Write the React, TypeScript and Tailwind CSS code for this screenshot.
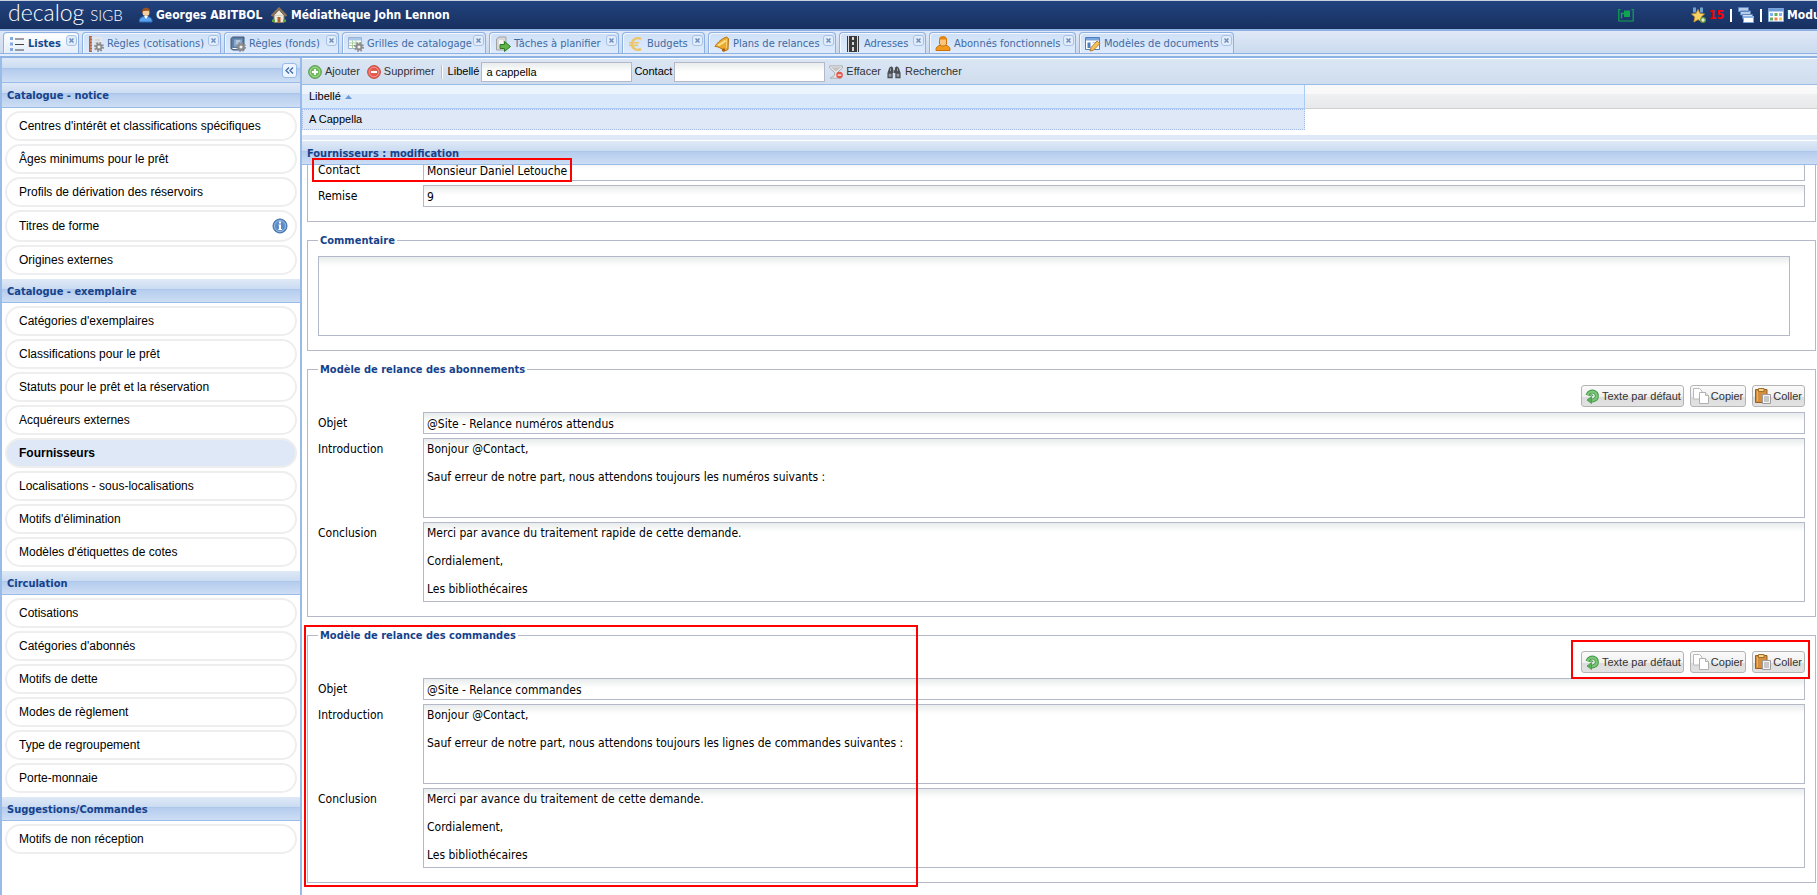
import type { ReactNode } from 'react';

const headerBar =
  'bg-[linear-gradient(to_bottom,#dfe9f6_0%,#cbdcf2_42%,#a9c5ea_43%,#b6cdee_50%,#cddef4_100%)] border-b border-[#99bbe8]';
const fieldBg = 'border border-[#b5b8c8] bg-white bg-[linear-gradient(to_bottom,#e9ecec_0px,#fdfdfd_8px,#ffffff_10px)]';

function Svg({ size = 16, children }: { size?: number; children: ReactNode }) {
  return (
    <svg width={size} height={size} viewBox="0 0 16 16" className="shrink-0" aria-hidden="true">
      {children}
    </svg>
  );
}

function Gear() {
  return (
    <g>
      <circle cx="11" cy="11" r="4" fill="none" stroke="#8e8e8e" strokeWidth="2" strokeDasharray="1.6 1.54" />
      <circle cx="11" cy="11" r="2.6" fill="#c4c4c4" stroke="#8a8a8a" strokeWidth="1.6" />
      <circle cx="11" cy="11" r="1" fill="#fff" />
    </g>
  );
}

const icons: Record<string, ReactNode> = {
  list: (
    <Svg>
      <path d="M1 1h3v3H1zM1 6.500h3v3H1zM1 12h3v3H1z" fill="#84a9dd" />
      <path d="M6 3h9M6 8.500h9M6 14h9" stroke="#444" strokeWidth="1" />
    </Svg>
  ),
  ruler: (
    <Svg>
      <path d="M5 1h9v13H5z" fill="#e4e6ea" />
      <path d="M7 4h5M7 7h5M7 10h3" stroke="#c3c7cf" />
      <path d="M1 0h3v16H1z" fill="#b5643c" />
      <path d="M2.500 2H4M2.500 5H4M2.500 8H4M2.500 11H4M2.500 14H4" stroke="#f4c9a8" />
      <Gear />
    </Svg>
  ),
  book: (
    <Svg>
      <path d="M1 2.500 2.500 1H14v13H2.500L1 12.500z" fill="#5e7ea3" stroke="#3c587b" />
      <path d="M4 3.500h8v7H4z" fill="#8aa9cc" />
      <path d="M6 5h4M6 7h3" stroke="#dce7f3" />
      <path d="M2.500 12.500H13" stroke="#fff" />
      <Gear />
    </Svg>
  ),
  grid: (
    <Svg>
      <path d="M.5 1.500h13v11H.5z" fill="#fff" stroke="#9db3d0" />
      <path d="M1 2h12v2.500H1z" fill="#a9c8ee" />
      <path d="M1 7h12M1 9.500h12M4.500 4.500v8M8 4.500v8" stroke="#a9cf9f" />
      <Gear />
    </Svg>
  ),
  task: (
    <Svg>
      <path d="M1.500 3 4 1h7v11l-2 2H1.500z" fill="#d8d8d8" stroke="#a2a2a2" />
      <path d="M4 4h4v8H4z" fill="#f4f4f4" />
      <path d="M5 8.500h4.500V5.500L15.500 10.500l-6 5v-3H5z" fill="#62b34a" stroke="#2c7d25" />
    </Svg>
  ),
  euro: (
    <Svg>
      <path d="M13 3.200A5.800 5.800 0 1 0 13 12.800" fill="none" stroke="#ecc66a" strokeWidth="2.600" />
      <path d="M1 6.700h10M1 9.400h9" stroke="#ecc66a" strokeWidth="1.600" />
    </Svg>
  ),
  bell: (
    <Svg>
      <path d="M12.500 1 14.500 2.500 14 13.500 10.500 15C8 12.500 4 10.500.8 10.300 3 8 5 4 12.500 1z" fill="#eda92c" stroke="#b87415" />
      <path d="M11.500 4.500c-2 2-5 3.500-7.500 5" stroke="#ffe08a" strokeWidth="2" fill="none" />
      <path d="M12.500 3v9" stroke="#fbd06b" />
      <circle cx="9.500" cy="14" r="1.700" fill="#a7651a" />
    </Svg>
  ),
  road: (
    <Svg>
      <path d="M2 0h12v16H2z" fill="#3a3a3a" />
      <path d="M3.500 0v16M12.500 0v16" stroke="#dcdcdc" />
      <path d="M8 1v3M8 6v3M8 11v4" stroke="#fff" strokeWidth="1.600" />
    </Svg>
  ),
  person: (
    <Svg>
      <path d="M1 14.500c-.5-4 3-5.500 7-5.500s7.500 1.500 7 5.500z" fill="#f59b1c" stroke="#c9710a" />
      <path d="M4.500 2.500C5 1 6.500.8 8 .8s3 .2 3.500 1.700V8l-2 2h-3l-2-2z" fill="#fbc67c" stroke="#c9710a" />
      <path d="M4 5C4 1.500 6 .5 8 .5s4 1 4 4.500L10.500 3.500h-5z" fill="#e8850f" />
    </Svg>
  ),
  model: (
    <Svg>
      <path d="M.5 1.500h14v12H.5z" fill="#fff" stroke="#4d7fc0" />
      <path d="M1 2h13v2.500H1z" fill="#79a5dd" />
      <path d="M2.500 6.500h3V12h-3z" fill="#4d7fc0" />
      <path d="M7.500 6.500H13" stroke="#bcd" />
      <path d="m5 15 1-3.500L12 5l3 2.500-6.500 6.700z" fill="#f3c25a" stroke="#a86d1d" strokeWidth=".8" />
    </Svg>
  ),
  add: (
    <Svg size={14}>
      <circle cx="8" cy="8" r="7.300" fill="#6fbb5b" stroke="#4b943c" />
      <circle cx="8" cy="8" r="5.600" fill="none" stroke="#b4dda8" />
      <path d="M8 4.500v7M4.500 8h7" stroke="#fff" strokeWidth="2.200" />
    </Svg>
  ),
  remove: (
    <Svg size={14}>
      <circle cx="8" cy="8" r="7.300" fill="#e4584c" stroke="#c23b32" />
      <circle cx="8" cy="8" r="5.600" fill="none" stroke="#f4a9a2" />
      <path d="M4.500 8h7" stroke="#fff" strokeWidth="2.400" />
    </Svg>
  ),
  clear: (
    <Svg size={14}>
      <path d="M.8 1h14.400v2.500L9.500 8.500V12l4.500 3H1.500L6.500 12V8.500L.8 3.500z" fill="#ececec" stroke="#a5a5a5" />
      <path d="M2 2.500h12L8 7.500z" fill="#c4c4c4" />
      <circle cx="12" cy="11.500" r="3.800" fill="#e4584c" />
      <path d="M10 11.500h4" stroke="#fff" strokeWidth="1.400" />
    </Svg>
  ),
  search: (
    <Svg size={14}>
      <path d="M2.500 3 5 1.500 7 3v3h2V3l2-1.500L13.500 3 15.500 9v6H9.500V9h-3v6H.5V9z" fill="#4a4f55" />
      <path d="M2 10h3v3.500H2zM11 10h3v3.500h-3z" fill="#9aa1a8" />
      <path d="M4 4v3M12 4v3M7.500 6v3" stroke="#a8adb3" />
    </Svg>
  ),
  reset: (
    <Svg>
      <path d="M3.500 7.200C4.500 3.800 8 2.800 10.700 4.300 13.600 6 13.600 10.300 10.500 11.800 9.500 12.300 8.500 12.500 7.500 12.500" fill="none" stroke="#3f9a45" strokeWidth="4" />
      <path d="M3.500 7.200C4.500 3.800 8 2.800 10.700 4.300 13.600 6 13.600 10.300 10.500 11.800 9.500 12.300 8.500 12.500 7.500 12.500" fill="none" stroke="#7cc579" strokeWidth="2.200" />
      <path d="M7.500 8.500v7L3 12z" fill="#5cb05b" stroke="#3f9a45" strokeWidth=".8" />
      <path d="M5.500 8c1-1.500 3-1.500 3.500 0" fill="none" stroke="#3f9a45" strokeWidth="1.200" />
    </Svg>
  ),
  copy: (
    <Svg>
      <path d="M.5.5h6l2.500 2.500v8H.5z" fill="#fff" stroke="#b9b9b9" />
      <path d="M6.500 4.500h6L15.500 7.500v8h-9z" fill="#fff" stroke="#b0b0b0" />
      <path d="M12.500 4.500v3h3" fill="#eee" stroke="#b0b0b0" />
    </Svg>
  ),
  paste: (
    <Svg>
      <path d="M.5 1.500h11.500v13H.5z" fill="#d48f3e" stroke="#9b5f1c" />
      <path d="M2.500 3v10" stroke="#e8b06a" />
      <path d="M3.500.5H9v3H3.500z" fill="#f4d58b" stroke="#a3702a" />
      <path d="M7.500 6.500h8v9h-8z" fill="#f4f4f4" stroke="#9b9b9b" />
      <path d="M9 9h5M9 11h5M9 13h5" stroke="#9b9b9b" />
    </Svg>
  ),
  user: (
    <Svg>
      <path d="M1.500 15c-.5-4 2-5.500 6-5.500s7 1.500 6.500 5.500z" fill="#5aa2ee" stroke="#2b6fc4" />
      <path d="M6 9h4l-2 3z" fill="#fff" />
      <circle cx="8" cy="5.500" r="3.500" fill="#f6cfa0" />
      <path d="M4 6C3.500 2 6 .8 8.500.8S12.500 3 12 6L10.500 3.800 5.500 4z" fill="#9a5220" />
    </Svg>
  ),
  home: (
    <Svg>
      <path d="M3 8h10v7.500H3z" fill="#efe9dc" stroke="#8a8375" />
      <path d="M3 8.500 8 3l5 5.500z" fill="#efe9dc" />
      <path d="M6.500 10h3v5.500h-3z" fill="#a8632a" />
      <path d="M.5 9 8 1.500 15.500 9" fill="none" stroke="#8f7355" strokeWidth="2.200" />
      <path d="M1 12.500h3V15H1zM12 12.500h3V15h-3z" fill="#5da53e" />
    </Svg>
  ),
  signal: (
    <Svg>
      <path d="M2.500 2.500H.8v11.500h14.400V2.500h-1.700" fill="none" stroke="#12a352" strokeWidth="1.200" />
      <path d="M3.500 11.500V6.500H6" fill="none" stroke="#12a352" strokeWidth="1.400" />
      <path d="M6 3.500h6v6.500H6z" fill="#12a352" />
    </Svg>
  ),
  medal: (
    <Svg>
      <path d="M3 .5h3v5H3zM10 .5h3v5h-3z" fill="#6fa3d4" />
      <path d="m8 2.500 1.900 4 4.600.5-3.400 3 1 5L8 12.500 3.900 15l1-5-3.400-3 4.600-.5z" fill="#f8d468" stroke="#d79c2c" strokeWidth=".8" />
      <circle cx="13" cy="13" r="3" fill="#6a9a3c" />
      <path d="M13 11.200v3.600M11.200 13h3.600" stroke="#fff" strokeWidth="1.200" />
    </Svg>
  ),
  windows: (
    <Svg>
      <path d="M.5.5h10v4H.5zM2.500 4h10v4h-10z" fill="#b9cdea" stroke="#5f86bd" />
      <path d="M4.500 7.500h10v4h-10z" fill="#d4e0f2" stroke="#5f86bd" />
      <path d="M5.500 9.500h10v6h-10z" fill="#fff" stroke="#7da4d8" />
      <path d="M5 9h11v2H5z" fill="#8db3e4" />
    </Svg>
  ),
  modules: (
    <Svg>
      <path d="M.5 1.500h15v13H.5z" fill="#fff" stroke="#89acd8" />
      <path d="M.5 1.500h15v3H.5z" fill="#6f9fdb" />
      <path d="M2 6h3v3H2z" fill="#7fb2ea" />
      <path d="M6.500 6h3v3h-3z" fill="#6bab5c" />
      <path d="M11 6h3v3h-3z" fill="#7fb2ea" />
      <path d="M2 10.500h3v3H2z" fill="#6bab5c" />
      <path d="M6.500 10.500h3v3h-3z" fill="#ee8352" />
      <path d="M11 10.500h3v3h-3z" fill="#f2c84b" />
    </Svg>
  ),
};

const tabs = [
  { label: 'Listes', icon: 'list', width: 'w-[76px]' },
  { label: 'Règles (cotisations)', icon: 'ruler', width: 'w-[139px]' },
  { label: 'Règles (fonds)', icon: 'book', width: 'w-[115px]' },
  { label: 'Grilles de catalogage', icon: 'grid', width: 'w-[144px]' },
  { label: 'Tâches à planifier', icon: 'task', width: 'w-[130px]' },
  { label: 'Budgets', icon: 'euro', width: 'w-[83px]' },
  { label: 'Plans de relances', icon: 'bell', width: 'w-[128px]' },
  { label: 'Adresses', icon: 'road', width: 'w-[87px]' },
  { label: 'Abonnés fonctionnels', icon: 'person', width: 'w-[147px]' },
  { label: 'Modèles de documents', icon: 'model', width: 'w-[155px]' },
];

const menu = [
  {
    title: 'Catalogue - notice',
    items: [
      "Centres d'intérêt et classifications spécifiques",
      'Âges minimums pour le prêt',
      'Profils de dérivation des réservoirs',
      'Titres de forme',
      'Origines externes',
    ],
  },
  {
    title: 'Catalogue - exemplaire',
    items: [
      "Catégories d'exemplaires",
      'Classifications pour le prêt',
      'Statuts pour le prêt et la réservation',
      'Acquéreurs externes',
      'Fournisseurs',
      'Localisations - sous-localisations',
      "Motifs d'élimination",
      "Modèles d'étiquettes de cotes",
    ],
  },
  {
    title: 'Circulation',
    items: ['Cotisations', "Catégories d'abonnés", 'Motifs de dette', 'Modes de règlement', 'Type de regroupement', 'Porte-monnaie'],
  },
  { title: 'Suggestions/Commandes', items: ['Motifs de non réception'] },
];

function TopBar() {
  return (
    <header className="flex h-[31px] items-center overflow-hidden border-t border-b-2 border-t-[#c9d3df] border-b-[#8db2e3] bg-linear-to-b from-[#22437f] to-[#17305f] pl-2 text-xs font-bold text-white">
      <div className="mb-[3px] flex w-[130px] shrink-0 items-baseline gap-[6px] font-['Lato',sans-serif] font-light leading-6">
        <span className="text-[23px]">decalog</span>
        <span className="text-[15px]">SIGB</span>
      </div>
      <div className="flex items-center gap-[2px] whitespace-nowrap">
        {icons.user}
        <span className="w-[113px]">Georges ABITBOL</span>
        {icons.home}
        <span className="ml-[2px]">Médiathèque John Lennon</span>
      </div>
      <div className="ml-auto flex shrink-0 items-center">
        {icons.signal}
        <div className="ml-14 flex w-[127px] items-center overflow-hidden">
          {icons.medal}
          <span className="ml-[3px] w-[21px] shrink-0 text-[#ff0000]">15</span>
          <span className="mr-[6px] h-[13px] w-[2px] shrink-0 bg-white" />
          {icons.windows}
          <span className="mx-[6px] h-[13px] w-[2px] shrink-0 bg-white" />
          {icons.modules}
          <span className="ml-[3px] whitespace-nowrap">Modu</span>
        </div>
      </div>
    </header>
  );
}

function TabBar() {
  return (
    <nav className="border-b-2 border-[#8db2e3] bg-[#e4edfa]">
      <div className="flex h-[23px] items-end gap-[3px] border-b border-[#8db2e3] bg-linear-to-b from-[#dfe8f6] to-[#cbdbef] pl-[3px]">
        {tabs.map((tab, i) => (
          <div
            key={tab.label}
            className={`relative flex h-[21px] shrink-0 rounded-t border border-b-0 border-[#8db2e3] shadow-[inset_1px_1px_0_#f4f8fd] ${tab.width} ${
              i === 0 ? 'bg-linear-to-b from-white to-[#e4edfa] font-bold text-[#15498b]' : 'bg-linear-to-b from-[#cfe0f7] to-[#deebfd] text-[#416aa3]'
            }`}
          >
            <button type="button" className="flex items-center gap-[3px] whitespace-nowrap pt-[2px] pl-[5px] text-[11px]">
              {icons[tab.icon]}
              {tab.label}
            </button>
            <button
              type="button"
              aria-label={`Fermer ${tab.label}`}
              className="absolute top-[2px] right-px flex size-[11px] items-center justify-center rounded-[3px] border border-[#a8c2e6] bg-[#e3edfa]"
            >
              <svg width="5" height="5" viewBox="0 0 5 5" aria-hidden="true">
                <path d="M.5.5l4 4M4.500.5l-4 4" stroke="#6c8fc0" strokeWidth="1.500" />
              </svg>
            </button>
          </div>
        ))}
      </div>
      <div className="h-[2px]" />
    </nav>
  );
}

function Sidebar() {
  return (
    <aside className="w-[302px] shrink-0 border-x-2 border-[#99bbe8] bg-white">
      <div className={`flex h-[25px] items-center justify-end pr-[3px] ${headerBar}`}>
        <button
          type="button"
          aria-label="Réduire"
          className="flex size-[15px] items-center justify-center rounded-[3px] border border-[#99bbe8] bg-[#edf4fd]"
        >
          <svg width="9" height="7" viewBox="0 0 9 7" aria-hidden="true">
            <path d="M4 .5 1 3.500l3 3M8 .5 5 3.500l3 3" fill="none" stroke="#3c69a8" strokeWidth="1.300" />
          </svg>
        </button>
      </div>
      {menu.map((group, g) => (
        <section key={group.title}>
          <h2 className={`flex items-center pt-[3px] pl-[5px] text-[11px] font-bold text-[#15428b] ${headerBar} ${g === 0 ? 'h-[25px]' : 'h-6'}`}>
            {group.title}
          </h2>
          <ul className="flex flex-col gap-[3px] px-[3px] pt-[3px] pb-1">
            {group.items.map((item) => (
              <li key={item}>
                <a
                  href="#"
                  className={`flex items-center justify-between rounded-full border-2 border-[#eeeeee] pr-[7px] pl-3 font-['Liberation_Sans',sans-serif] text-xs text-black ${
                    item === 'Titres de forme' ? 'h-8' : 'h-[30px]'
                  } ${item === 'Fournisseurs' ? 'bg-[#dfe8f6] font-bold' : ''}`}
                >
                  {item}
                  {item === 'Titres de forme' && (
                    <Svg>
                      <circle cx="8" cy="8" r="7" fill="#5b8cc6" stroke="#3f6ea8" />
                      <circle cx="8" cy="8" r="5.500" fill="none" stroke="#a9c6e8" strokeWidth=".8" />
                      <path d="M7 3.500h2v2H7zM6.500 6.500H9v4.500h1V12H6.300v-1H7V7.500h-.5z" fill="#fff" />
                    </Svg>
                  )}
                </a>
              </li>
            ))}
          </ul>
        </section>
      ))}
    </aside>
  );
}

function Toolbar() {
  return (
    <div className="flex h-[27px] items-center border-t border-b border-t-white border-b-[#99bbe8] bg-linear-to-b from-[#dbe6f4] to-[#cfddee] pl-[6px] font-['Liberation_Sans',sans-serif] text-[11px] text-black">
      <button type="button" className="flex items-center gap-[3px] text-[#333]">
        {icons.add} Ajouter
      </button>
      <button type="button" className="ml-[7px] flex items-center gap-[3px] text-[#333]">
        {icons.remove} Supprimer
      </button>
      <span className="mr-[5px] ml-[6px] h-[14px] w-[2px] border-r border-l border-r-white border-l-[#98c8ff]" />
      <label htmlFor="f-libelle">Libellé</label>
      <input id="f-libelle" defaultValue="a cappella" className={`ml-[2px] h-5 w-[151px] px-1 ${fieldBg}`} />
      <label htmlFor="f-contact" className="ml-[2px]">Contact</label>
      <input id="f-contact" className={`ml-[2px] h-5 w-[151px] px-1 ${fieldBg}`} />
      <button type="button" className="ml-[4px] flex items-center gap-[3px] text-[#333]">
        {icons.clear} Effacer
      </button>
      <button type="button" className="ml-[6px] flex items-center gap-[4px] text-[#333]">
        {icons.search} Rechercher
      </button>
    </div>
  );
}

function Row({ id, label, children }: { id: string; label: string; children: ReactNode }) {
  return (
    <div className="flex">
      <label htmlFor={id} className="w-[105px] shrink-0 pt-[6px] leading-[11px]">{label}</label>
      {children}
    </div>
  );
}

function TextRow({ id, label, value }: { id: string; label: string; value: string }) {
  return (
    <Row id={id} label={label}>
      <input id={id} defaultValue={value} className={`h-[22px] min-w-0 flex-1 px-[3px] pt-px ${fieldBg}`} />
    </Row>
  );
}

function AreaRow({ id, label, value }: { id: string; label: string; value: string }) {
  return (
    <Row id={id} label={label}>
      <textarea
        id={id}
        defaultValue={value}
        className={`h-20 min-w-0 flex-1 resize-none overflow-hidden px-[3px] py-[3px] leading-[14px] ${fieldBg}`}
      />
    </Row>
  );
}

function FormButton({ icon, children }: { icon: string; children: ReactNode }) {
  return (
    <button
      type="button"
      className="flex h-[22px] items-center gap-[2px] rounded-[3px] border border-[#b4b4b4] bg-[linear-gradient(to_bottom,#fafafa_0%,#f0f0f0_55%,#dddddd_56%,#e2e2e2_100%)] px-[2px] font-['Liberation_Sans',sans-serif] text-[11px] text-[#333]"
    >
      {icons[icon]}
      {children}
    </button>
  );
}

function Legend({ children }: { children: ReactNode }) {
  return <legend className="px-[2px] text-[11px] leading-[15px] font-bold text-[#15428b]">{children}</legend>;
}

function Template({ id, title, subject, intro, end }: { id: string; title: string; subject: string; intro: string; end: string }) {
  return (
    <fieldset className="mt-[11px] border border-[#b5b8c8] px-[10px] pb-[14px]">
      <Legend>{title}</Legend>
      <div className="mt-[8px] mb-[5px] flex justify-end gap-[6px]">
        <FormButton icon="reset">Texte par défaut</FormButton>
        <FormButton icon="copy">Copier</FormButton>
        <FormButton icon="paste">Coller</FormButton>
      </div>
      <div className="flex flex-col gap-1">
        <TextRow id={`${id}-objet`} label="Objet" value={subject} />
        <AreaRow id={`${id}-intro`} label="Introduction" value={intro} />
        <AreaRow id={`${id}-conclusion`} label="Conclusion" value={end} />
      </div>
    </fieldset>
  );
}

export default function App() {
  return (
    <div className="flex min-h-screen flex-col overflow-hidden bg-white font-['DejaVu_Sans_Condensed','DejaVu_Sans',sans-serif] text-xs text-black">
      <TopBar />
      <TabBar />
      <div className="flex flex-1">
        <Sidebar />
        <main className="relative min-w-0 flex-1">
          <Toolbar />
          <table className="w-full border-separate border-spacing-0 text-left font-['Liberation_Sans',sans-serif] text-[11px]">
            <thead>
              <tr className="h-6">
                <th className="w-[1003px] border-r border-b border-[#aaccf6] bg-[linear-gradient(to_bottom,#ebf3fd_0%,#ebf3fd_40%,#d9e8fb_41%,#d9e8fb_100%)] px-[7px] py-0 font-normal">
                  <span className="flex items-center gap-1">
                    Libellé
                    <svg width="7" height="4" viewBox="0 0 7 4" aria-hidden="true">
                      <path d="M0 4 3.500 0 7 4z" fill="#6b97d3" />
                    </svg>
                  </span>
                </th>
                <td className="border-b border-[#d0d0d0] bg-[linear-gradient(to_bottom,#f9f9f9_0%,#f9f9f9_40%,#eff0f1_41%,#e8e9ea_100%)] p-0" />
              </tr>
            </thead>
            <tbody>
              <tr className="h-[21px]">
                <td className="border border-dotted border-[#a3bae9] bg-[#dfe8f6] px-[6px] py-0">A Cappella</td>
                <td className="p-0" />
              </tr>
            </tbody>
          </table>
          <div className="mt-[5px] h-[6px] border-b border-white bg-[#dfe8f6]" />
          <h2 className={`flex h-6 items-center pt-[3px] pl-[5px] text-[11px] font-bold text-[#15428b] ${headerBar}`}>Fournisseurs : modification</h2>

          {/* form is scrolled down, so its first row is partly hidden */}
          <div className="overflow-hidden pr-px pl-[5px]">
            <form className="-mt-[6px]">
              <fieldset className="flex flex-col gap-1 border border-t-0 border-[#b5b8c8] px-[10px] pb-[14px]">
                <TextRow id="contact" label="Contact" value="Monsieur Daniel Letouche" />
                <TextRow id="remise" label="Remise" value="9" />
              </fieldset>
              <fieldset className="mt-[11px] border border-[#b5b8c8] px-[10px] pb-[14px]">
                <Legend>Commentaire</Legend>
                <div className="mt-[8px] flex pr-[15px]">
                  <textarea aria-label="Commentaire" className={`h-20 flex-1 resize-none ${fieldBg}`} />
                </div>
              </fieldset>
              <Template
                id="abonnements"
                title="Modèle de relance des abonnements"
                subject="@Site - Relance numéros attendus"
                intro={'Bonjour @Contact,\n\nSauf erreur de notre part, nous attendons toujours les numéros suivants :'}
                end={'Merci par avance du traitement rapide de cette demande.\n\nCordialement,\n\nLes bibliothécaires'}
              />
              <Template
                id="commandes"
                title="Modèle de relance des commandes"
                subject="@Site - Relance commandes"
                intro={'Bonjour @Contact,\n\nSauf erreur de notre part, nous attendons toujours les lignes de commandes suivantes :'}
                end={'Merci par avance du traitement de cette demande.\n\nCordialement,\n\nLes bibliothécaires'}
              />
            </form>
          </div>

          {/* red highlights */}
          <div className="pointer-events-none absolute top-[100px] left-[10px] h-6 w-[260px] border-2 border-[#ff0000]" />
          <div className="pointer-events-none absolute top-[567px] left-[2px] h-[262px] w-[614px] border-2 border-[#ff0000]" />
          <div className="pointer-events-none absolute top-[582px] right-[7px] h-[39px] w-[239px] border-2 border-[#ff0000]" />
        </main>
      </div>
    </div>
  );
}
